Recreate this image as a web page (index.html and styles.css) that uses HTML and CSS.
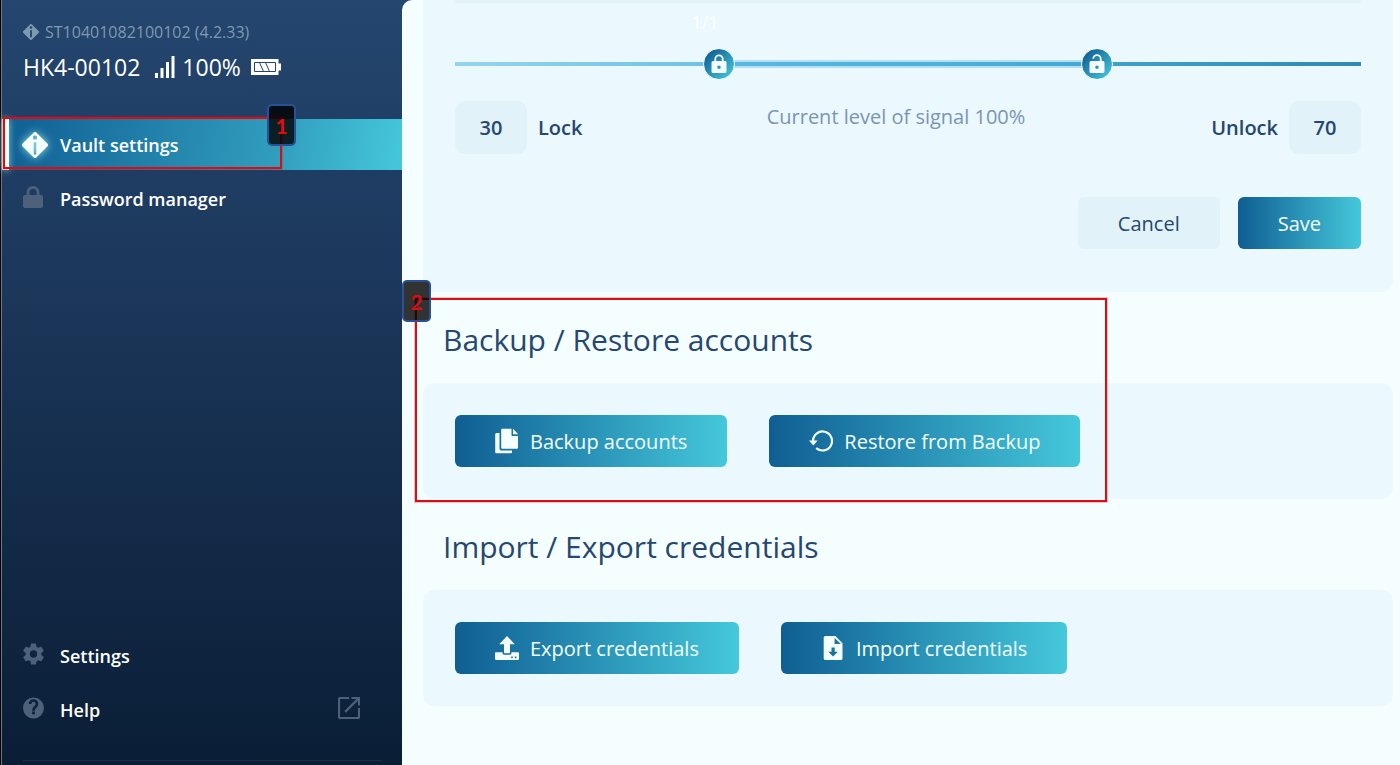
FILE: index.html
```html
<!DOCTYPE html>
<html lang="en">
<head>
<meta charset="utf-8">
<meta name="viewport" content="width=device-width, initial-scale=1">
<title>Vault settings</title>
<link rel="stylesheet" href="styles.css">
</head>
<body>
<div class="app">
  <aside class="sidebar">
    <header class="device">
      <div class="serial">
        <svg width="16" height="16" viewBox="0 0 24 24" aria-hidden="true"><path fill="currentColor" fill-rule="evenodd" d="M10.6.6a2 2 0 0 1 2.800 0l10 10a2 2 0 0 1 0 2.800l-10 10a2 2 0 0 1-2.800 0l-10-10a2 2 0 0 1 0-2.800zM12 3.200a2 2 0 1 0 0 4 2 2 0 0 0 0-4zM10.600 9.500V19l1.400 1.500 1.400-1.500V9.500z"/></svg>
        <span>ST10401082100102 (4.2.33)</span>
      </div>
      <div class="status">
        <span class="device-name">HK4-00102</span>
        <svg width="20" height="22" viewBox="0 0 20 22" aria-hidden="true"><path fill="currentColor" d="M0 17h3v5H0zM5.500 12h3v10h-3zM11 6h3v16h-3zM16.500 0h3v22h-3z"/></svg>
        <span class="level">100%</span>
        <svg width="30" height="16" viewBox="0 0 30 16" aria-hidden="true"><path fill="currentColor" d="M0 0h27.500v4.500H30v7h-2.500V16H0z"/><path fill="none" stroke="#23436a" d="M3.500 3.500h21v9h-21zM8.500 3.500l4 9M14.500 3.500l4 9"/></svg>
      </div>
    </header>
    <nav class="nav">
      <a class="nav-item active" href="#vault">
        <svg class="glow" width="26" height="26" viewBox="0 0 24 24" aria-hidden="true"><path fill="currentColor" fill-rule="evenodd" d="M10.600.6a2 2 0 0 1 2.800 0l10 10a2 2 0 0 1 0 2.800l-10 10a2 2 0 0 1-2.800 0l-10-10a2 2 0 0 1 0-2.800zM12 3.200a2 2 0 1 0 0 4 2 2 0 0 0 0-4zM10.800 9.500V20l1.200 1.500 1.200-1.500V9.500z"/></svg>
        <span>Vault settings</span>
        <span class="mark mark-nav"><b class="tag tag-right">1</b></span>
      </a>
      <a class="nav-item" href="#passwords">
        <svg class="muted" width="20" height="22" viewBox="0 0 20 22" aria-hidden="true"><rect y="9" width="20" height="13" rx="2" fill="currentColor"/><path fill="none" stroke="currentColor" stroke-width="2.800" d="M5 10V6.400a5 5 0 0 1 10 0V10"/></svg>
        <span>Password manager</span>
      </a>
    </nav>
    <nav class="nav nav-bottom">
      <a class="nav-item" href="#settings">
        <svg class="muted" width="21" height="22" viewBox="2 2 20 20" aria-hidden="true"><path fill="currentColor" d="M19.430 12.980c.04-.32.070-.64.070-.980s-.03-.66-.07-.980l2.110-1.650c.19-.15.24-.42.120-.64l-2-3.460c-.12-.22-.39-.3-.61-.22l-2.490 1c-.52-.4-1.080-.73-1.690-.98l-.38-2.650C14.460 2.180 14.250 2 14 2h-4c-.25 0-.46.18-.49.420l-.38 2.650c-.61.25-1.170.59-1.690.98l-2.490-1c-.23-.09-.49 0-.61.220l-2 3.460c-.13.22-.07.49.12.64l2.110 1.650c-.04.32-.07.65-.07.980s.03.66.070.980l-2.110 1.650c-.19.15-.24.42-.12.640l2 3.460c.12.220.39.300.61.220l2.490-1c.52.400 1.080.730 1.690.980l.38 2.650c.03.240.24.420.49.420h4c.25 0 .46-.18.490-.42l.38-2.650c.61-.25 1.170-.59 1.690-.98l2.490 1c.23.090.49 0 .61-.22l2-3.460c.12-.22.070-.49-.12-.64zM12 15.500a3.500 3.500 0 1 1 0-7 3.500 3.500 0 0 1 0 7z"/></svg>
        <span>Settings</span>
      </a>
      <a class="nav-item" href="#help">
        <svg class="muted" width="21" height="22" viewBox="2 2 20 20" aria-hidden="true"><path fill="currentColor" d="M12 2a10 10 0 1 0 0 20 10 10 0 0 0 0-20zm1.300 16h-2.600v-2.600h2.600zm2.300-7.200-.9.900c-.9.900-1.400 1.500-1.400 2.800h-2.500c0-1.800.5-2.900 1.400-3.800l1.200-1.200c.4-.4.600-.8.600-1.400a2 2 0 0 0-4 0H7.500a4.500 4.500 0 0 1 9 0c0 1-.4 2-.9 2.700z"/></svg>
        <span>Help</span>
        <svg class="muted external" width="22" height="22" viewBox="3 3 18 18" aria-hidden="true"><path fill="currentColor" d="M19.300 19.300H4.700V4.700H12V3H4.500C3.600 3 3 3.600 3 4.500v15c0 .9.600 1.500 1.500 1.500h15c.9 0 1.500-.6 1.500-1.500V12h-1.700zM14 3v1.700h4l-9.800 9.800 1.300 1.300L19.300 6v4H21V3z"/></svg>
      </a>
    </nav>
  </aside>

  <main class="main">
    <section class="card proximity">
      <div class="field-edge"></div>
      <div class="slider">
        <span class="counter">1/1</span>
        <div class="track"></div>
        <div class="range"></div>
        <input class="thumb thumb-lock" type="range" min="0" max="100" value="30" aria-label="Lock level">
        <input class="thumb thumb-unlock" type="range" min="0" max="100" value="70" aria-label="Unlock level">
      </div>
      <div class="levels">
        <div class="level-field">
          <input class="number" id="lock" type="text" value="30">
          <label for="lock">Lock</label>
        </div>
        <p class="signal">Current level of signal 100%</p>
        <div class="level-field level-end">
          <label for="unlock">Unlock</label>
          <input class="number" id="unlock" type="text" value="70">
        </div>
      </div>
      <div class="actions">
        <button class="btn btn-plain" type="button">Cancel</button>
        <button class="btn btn-save" type="button">Save</button>
      </div>
    </section>

    <section class="group">
      <h2>Backup / Restore accounts</h2>
      <div class="card card-row">
        <button class="btn" type="button">
          <svg width="24" height="26" viewBox="0 0 24 26" aria-hidden="true"><path fill="currentColor" d="M2 5h2.500v15.500c0 1.300.7 2 2 2H17V24c0 .8-.5 1.300-1.300 1.300H1.500C.7 25.300.2 24.800.2 24V6.500C.2 5.500 1 5 2 5z"/><path fill="currentColor" d="M7.500.8h9V7c0 .6.400 1 1 1H23v11.500c0 .8-.5 1.300-1.300 1.300H7.500c-.8 0-1.300-.5-1.300-1.300V2.100C6.200 1.300 6.700.8 7.500.8zM18 .8 23.200 6.300H18z"/></svg>
          Backup accounts
        </button>
        <button class="btn" type="button">
          <svg width="24" height="22" viewBox="0 0 24 22" aria-hidden="true"><path fill="none" stroke="currentColor" stroke-width="2.200" d="M4 12.500V11a9.500 9.500 0 1 1 3.200 7.100"/><path fill="currentColor" d="M0 10.500h8.600l-4.300 5z"/></svg>
          Restore from Backup
        </button>
      </div>
      <span class="mark mark-group"><b class="tag tag-left">2</b></span>
    </section>

    <section class="group">
      <h2>Import / Export credentials</h2>
      <div class="card card-row">
        <button class="btn" type="button">
          <svg width="24" height="24" viewBox="0 0 24 24" aria-hidden="true"><path fill="currentColor" d="M12 0l7.800 8.200H15v8c0 .6-.4 1-1 1h-4c-.6 0-1-.4-1-1v-8H4.200z"/><path fill="currentColor" fill-rule="evenodd" d="M1.200 16.200h6.300v.8c0 1 .7 1.700 1.700 1.700h5.600c1 0 1.700-.7 1.700-1.700v-.8h6.300c.7 0 1.200.5 1.200 1.200v5.400c0 .7-.5 1.200-1.200 1.200H1.200C.5 24 0 23.500 0 22.800v-5.400c0-.7.5-1.200 1.200-1.200zM16.200 20.600v1.600h1.600v-1.600zM19.800 20.600v1.600h1.600v-1.600z"/></svg>
          Export credentials
        </button>
        <button class="btn" type="button">
          <svg width="24" height="24" viewBox="0 0 24 24" aria-hidden="true"><path fill="currentColor" fill-rule="evenodd" d="M4.500 0h9.800l7.200 7.200v15c0 1.100-.7 1.800-1.800 1.800H4.500c-1.100 0-1.800-.7-1.800-1.800V1.800C2.700.7 3.400 0 4.500 0zM13.600 1.900v6.200h6.200zM10.500 11.400v4.300H7.300l4.800 4.900 4.800-4.900h-3.200v-4.300z"/></svg>
          Import credentials
        </button>
      </div>
    </section>
  </main>
</div>
</body>
</html>
```
FILE: styles.css
```css
* {
  box-sizing: border-box;
}

body {
  margin: 0;
  font-family: "Open Sans", "Noto Sans", sans-serif;
  font-size: 20px;
  color: #26476f;
  background: #0a1d35;
}

button,
input {
  font: inherit;
  color: inherit;
}

svg {
  flex: none;
}

.app {
  display: flex;
  min-height: 100vh;
  background: linear-gradient(#24466f, #1b3659 40%, #0a1e36);
}

/* Sidebar */
.sidebar {
  display: flex;
  flex-direction: column;
  flex: none;
  width: 402px;
  padding-bottom: 4px;
  border-left: 1px solid #000;
  box-shadow: inset 1px 0 #68778c;
  color: #fff;
}

.device {
  padding: 20px 22px 0;
}

.serial,
.status {
  display: flex;
  align-items: center;
}

.serial {
  gap: 6px;
  font-size: 16px;
  line-height: 24px;
  color: #7f99b1;
}

.status {
  margin-top: 7px;
  font-size: 23px;
  line-height: 32px;
}

.device-name {
  margin-right: 15px;
}

.level {
  margin: 0 10px 0 7px;
}

.nav {
  display: flex;
  flex-direction: column;
  gap: 3px;
  margin-top: 36px;
}

.nav-item {
  position: relative;
  display: grid;
  grid-template-columns: 37px 1fr auto;
  align-items: center;
  height: 51px;
  padding: 0 42px 0 22px;
  color: #fff;
  font-size: 18px;
  font-weight: 600;
  text-decoration: none;
}

.nav-item.active {
  margin-left: 1px;
  padding-left: 21px;
  background: linear-gradient(100deg, #0f5e93, #319dbd 68%, #45c8db);
}

.nav-item.active::before {
  content: "";
  position: absolute;
  left: 0;
  width: 7px;
  height: 100%;
  background: #f4fffe;
  box-shadow: 0 0 7px rgba(158, 230, 232, 0.8);
}

.muted {
  margin-bottom: 4px;
  color: #4d617a;
}

.glow {
  margin-left: -1px;
  color: #f4fffe;
  filter: drop-shadow(0 0 4px #9ee6e8);
}

.nav-bottom {
  margin: auto 0 0;
}

.nav-bottom::after {
  content: "";
  height: 1px;
  margin: 22px 21px 0 22px;
  background: #17304b;
}

/* Content */
.main {
  flex: 1;
  min-width: 0;
  padding: 0 7px 20px 21px;
  border-top-left-radius: 10px;
  background: #f5feff;
}

.card {
  padding: 32px;
  border-radius: 12px;
  background: #ebf8fd;
}

.proximity {
  padding-top: 0;
  padding-bottom: 43px;
  border-radius: 0 0 12px 12px;
}

.field-edge {
  height: 3px;
  border-radius: 0 0 8px 8px;
  background: #e1f2f9;
}

.slider {
  position: relative;
  height: 98px;
  padding-top: 59px;
}

.counter {
  position: absolute;
  left: 27.600%;
  top: 6px;
  transform: translateX(-50%);
  font-size: 18px;
  line-height: 26px;
  color: #fff;
}

.track {
  height: 4px;
  background: linear-gradient(90deg, #94d5ee, #46add8 60%, #3089b0);
}

.range {
  position: absolute;
  left: 29%;
  right: 29%;
  top: 57px;
  height: 8px;
  border: solid #b5e0f3;
  border-width: 2px 0;
  background: linear-gradient(90deg, #58b9e1, #42a9d5);
}

.thumb {
  position: absolute;
  left: -36px;
  top: 45px;
  width: calc(100% + 72px);
  height: 32px;
  margin: 0;
  appearance: none;
  background: none;
  pointer-events: none;
}

.thumb::-webkit-slider-thumb {
  appearance: none;
  width: 32px;
  height: 32px;
  border: 1px solid #f4fcff;
  border-radius: 50%;
  pointer-events: auto;
}

.thumb-lock::-webkit-slider-thumb {
  background: url("data:image/svg+xml,%3Csvg xmlns='http://www.w3.org/2000/svg' viewBox='0 0 30 30'%3E%3Cpath fill='%23f4fcff' fill-rule='evenodd' d='M9 12h12q1.500 0 1.500 1.500v9q0 1.500-1.500 1.500H9q-1.500 0-1.500-1.500v-9Q7.500 12 9 12zM15 16.400a1.800 1.800 0 1 0 0 3.600 1.800 1.800 0 0 0 0-3.600z'/%3E%3Cpath fill='none' stroke='%23f4fcff' stroke-width='1.800' d='M11.300 12.500V10a3.700 3.700 0 0 1 7.400 0v2.500'/%3E%3C/svg%3E") center / 30px 30px, linear-gradient(135deg, #0f5e93 10%, #45c8db 95%);
}

.thumb-unlock::-webkit-slider-thumb {
  background: url("data:image/svg+xml,%3Csvg xmlns='http://www.w3.org/2000/svg' viewBox='0 0 30 30'%3E%3Cpath fill='%23f4fcff' fill-rule='evenodd' d='M9 12h12q1.500 0 1.500 1.500v9q0 1.500-1.500 1.500H9q-1.500 0-1.500-1.500v-9Q7.500 12 9 12zM15 16.400a1.800 1.800 0 1 0 0 3.600 1.800 1.800 0 0 0 0-3.600z'/%3E%3Cpath fill='none' stroke='%23f4fcff' stroke-width='1.800' d='M11.300 9.800a3.700 3.700 0 0 1 7.400 0v2.700'/%3E%3C/svg%3E") center / 30px 30px, linear-gradient(135deg, #0f5e93 10%, #45c8db 95%);
}

.levels {
  display: grid;
  grid-template-columns: 1fr auto 1fr;
  align-items: start;
}

.level-field {
  display: flex;
  align-items: center;
  gap: 11px;
  font-weight: 600;
}

.level-end {
  justify-content: flex-end;
}

.number {
  width: 72px;
  height: 53px;
  padding: 0;
  border: 0;
  border-radius: 10px;
  background: #e1f2f9;
  text-align: center;
}

.signal {
  margin: 0;
  padding-right: 24px;
  line-height: 32px;
  color: #7b95b3;
}

.actions {
  display: flex;
  justify-content: flex-end;
  gap: 18px;
  margin-top: 43px;
}

.btn {
  display: inline-flex;
  align-items: center;
  justify-content: center;
  gap: 11px;
  height: 52px;
  padding: 0 40px;
  border: 0;
  border-radius: 6px;
  background: linear-gradient(90deg, #0f5e93, #45c8db);
  color: #f4fffe;
  white-space: nowrap;
}

.btn-plain {
  background: #e1f2f9;
  color: #26476f;
}

.group {
  position: relative;
}

h2 {
  margin: 0;
  padding: 26px 20px 21px;
  font-size: 30px;
  font-weight: 400;
  line-height: 44px;
}

.card-row {
  display: flex;
  flex-wrap: wrap;
  gap: 42px;
}

/* Numbered callouts */
.mark {
  position: absolute;
  border: 2px solid #d90d12;
  outline: 1px solid rgba(217, 13, 18, 0.25);
  pointer-events: none;
}

.mark-nav {
  left: 1px;
  top: -2px;
  width: 279px;
  height: 52px;
}

.mark-group {
  left: -8px;
  top: 6px;
  width: 692px;
  height: 204px;
}

.tag {
  position: absolute;
  display: grid;
  place-items: center;
  width: 29px;
  height: 42px;
  border: 2px solid #2a509a;
  border-radius: 5px;
  background: rgba(0, 0, 0, 0.8);
  color: #d90d12;
  font-family: Lato, sans-serif;
  font-size: 21px;
}

.tag-right {
  top: -15px;
  right: -16px;
}

.tag-left {
  top: -20px;
  left: -15px;
}
```
